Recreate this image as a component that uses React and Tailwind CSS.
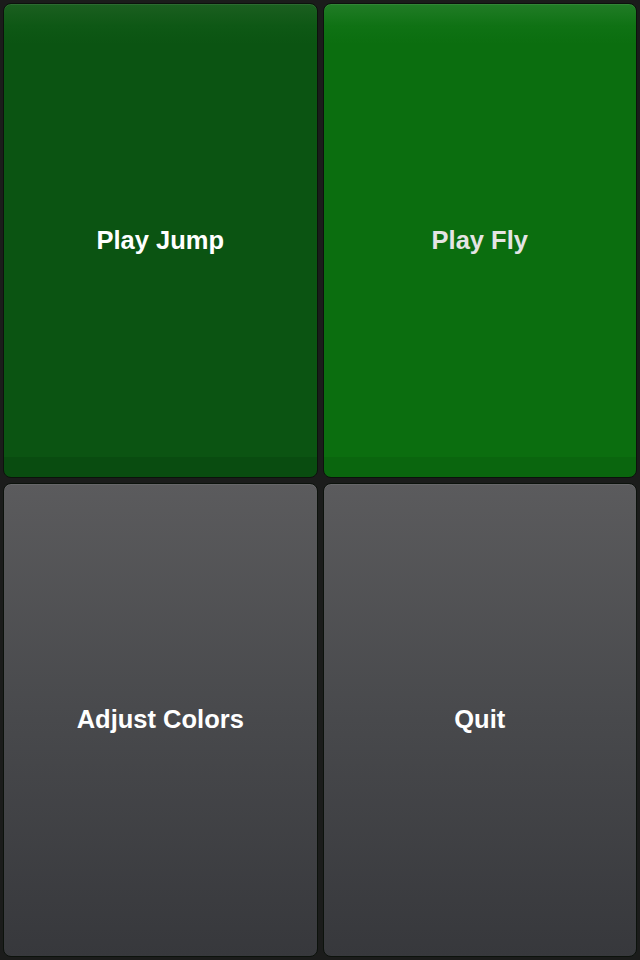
import React from 'react';

const tiles = [
    {
        label: 'Play Jump',
        bg: 'bg-[linear-gradient(to_bottom,#1b5f20_0px,#0e5815_22px,#0b5412_40px,#0b5412_calc(100%_-_20px),#094c10_calc(100%_-_20px),#094c10_100%)]',
        text: 'text-white',
    },
    {
        label: 'Play Fly',
        bg: 'bg-[linear-gradient(to_bottom,#217c26_0px,#0f7214_22px,#0b6e0f_40px,#0b6e0f_calc(100%_-_20px),#0a660e_calc(100%_-_20px),#0a660e_100%)]',
        text: 'text-[#e4e4e4]',
    },
    {
        label: 'Adjust Colors',
        bg: 'bg-[linear-gradient(to_bottom,#5b5b5d_0%,#48494c_50%,#37383c_100%)]',
        text: 'text-white',
    },
    {
        label: 'Quit',
        bg: 'bg-[linear-gradient(to_bottom,#5b5b5d_0%,#48494c_50%,#37383c_100%)]',
        text: 'text-white',
    },
];

const Tile = ({ label, bg, text }) => (
    <button
        className={`flex items-center justify-center rounded-[8px] border border-[#0c120c] shadow-[inset_0_1px_0_rgba(255,255,255,0.08)] ${bg}`}
    >
        <span className={`text-[25.5px] font-bold leading-none ${text}`}>{label}</span>
    </button>
);

export default function App() {
    return (
        <div
            className="grid h-[960px] w-[640px] grid-cols-2 grid-rows-2 gap-[5px] bg-[#1b1c1b] p-[3px]"
            style={{ fontFamily: '"Liberation Sans", Arial, sans-serif' }}
        >
            {tiles.map((t) => (
                <Tile key={t.label} {...t} />
            ))}
        </div>
    );
}
